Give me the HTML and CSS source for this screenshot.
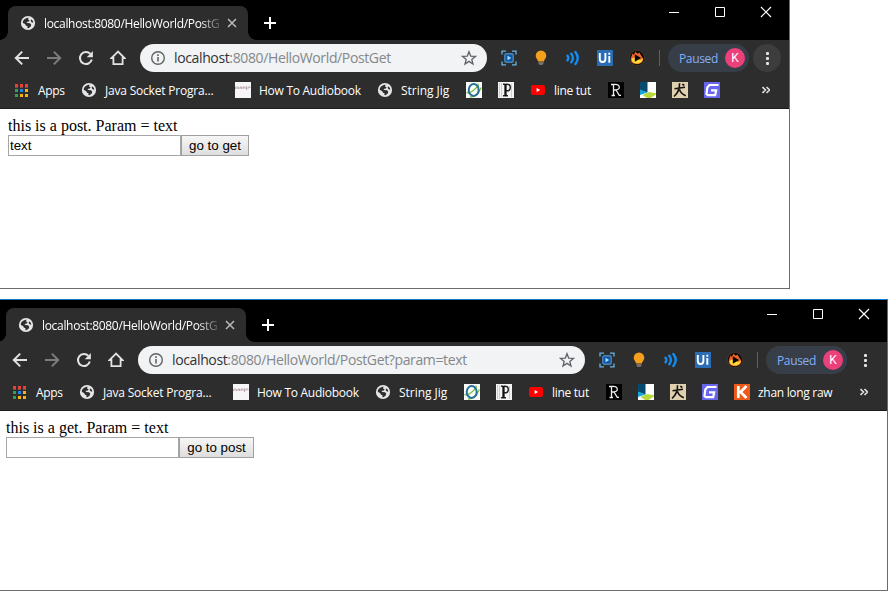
FILE: index.html
```
<!DOCTYPE html>
<html lang="en">
<head>
<meta charset="utf-8">
<title>PostGet</title>
<link rel="stylesheet" href="styles.css">
</head>
<body>
<svg class="sprite" aria-hidden="true">
  <symbol id="globe" viewBox="0 0 16 16"><circle cx="8" cy="8" r="7.1" fill="#e4e5e7"/><path d="M2.7 7.8C3 5.2 4.2 4 6.2 3.3L8.6 2.5 8 4.4 9.6 5.2 8.8 6.5 6.5 7 7.2 8.1 10 8.2 11.2 9.6 10.8 11.6 8.4 13.3 7.3 13 7.6 11.2 5.7 10.5 5.2 9 3.8 8.6ZM11 4.2l1.8 1.5.5 2.1-1.7-.5-.9-1.4z" fill="#2d2d2d"/></symbol>
  <symbol id="back" viewBox="0 0 16 16"><path d="M15 8H2M8.2 1.6 1.8 8l6.4 6.4" fill="none" stroke="currentColor" stroke-width="2"/></symbol>
  <symbol id="forward" viewBox="0 0 16 16"><path d="M1 8h13M7.8 1.6 14.2 8l-6.4 6.4" fill="none" stroke="currentColor" stroke-width="2"/></symbol>
  <symbol id="reload" viewBox="0 0 16 16"><path d="M13.8 9.6A6 6 0 1 1 12.4 3.9" fill="none" stroke="currentColor" stroke-width="2"/><path d="M14.9 1v6.2H8.7z" fill="currentColor"/></symbol>
  <symbol id="home" viewBox="0 0 16 16"><path d="M8 1.6 1.5 8H3.4v6.2h9.2V8h1.9z" fill="none" stroke="currentColor" stroke-width="1.8"/></symbol>
  <symbol id="info" viewBox="0 0 16 16"><circle cx="8" cy="8" r="6.3" fill="none" stroke="#5f6368" stroke-width="1.4"/><path d="M8 4.3v1.6M8 7.1v4.4" stroke="#5f6368" stroke-width="1.6"/></symbol>
  <symbol id="star" viewBox="0 0 16 16"><path d="m8 1.7 1.7 4.4 4.7.3-3.6 3 1.2 4.6L8 11.4 4 14l1.2-4.6-3.6-3 4.7-.3z" fill="none" stroke="#5f6368" stroke-width="1.3"/></symbol>
  <symbol id="capture" viewBox="0 0 16 16"><path d="M1 4.500V1.200h4M11 1.200h4v3.300M15 11.500v3.300h-4M5 14.800H1v-3.300" fill="none" stroke="#6ab4e4" stroke-width="1.300"/><rect x="3.800" y="3.800" width="8.400" height="8.400" rx="1.500" fill="#0f56a8" stroke="#4a86b4" stroke-width="1.400"/><path d="M6.500 5.700v4.600L10.100 8z" fill="#a8e4ff"/></symbol>
  <symbol id="bulb" viewBox="0 0 16 16"><path d="M8 .500a5.300 5.300 0 0 0-5.300 5.300c0 2.300 1.600 3.300 2.500 5.700h5.600c.9-2.400 2.500-3.400 2.500-5.700A5.300 5.300 0 0 0 8 .500z" fill="#f5a01c"/><path d="M5.500 12h5v1.800l-1.200 1.200H6.700l-1.200-1.200z" fill="#77706a"/></symbol>
  <symbol id="sound" viewBox="0 0 16 16"><path d="M2.500 5.700q1.800 2.300 0 4.600M6.300 3.800q3.300 4.200 0 8.400M10.400 2q4.700 6 0 12" fill="none" stroke="#148cf0" stroke-width="2.400" stroke-linecap="round"/></symbol>
  <symbol id="uipath" viewBox="0 0 16 16"><path d="M0 0h16v16H0z" fill="#2a6db5"/><path d="M2.800 3v6q0 3 2.800 3t2.800-3V3M12.300 6v6.700M12.300 2.800v1.900" fill="none" stroke="#fff" stroke-width="1.900"/></symbol>
  <symbol id="flame" viewBox="0 0 16 16"><circle cx="8" cy="8" r="7.500" fill="#080808" stroke="#54402f" stroke-width=".7"/><path d="M1.800 9.500C1.800 7 3 6 3.300 3.500l1.500 1.300L6.500 1.800l2.300 2 1.700-1.300 1.500 2.800 2.200 3.200c0 3.700-2.800 5.700-6.200 5.700s-6.200-1.800-6.200-4.700z" fill="#f0642a"/><path d="M2.500 9 5 7.500l6 2.500 2.800-1.500c0 3.500-2.800 5-5.800 5S2.800 12 2.500 9z" fill="#ffdc30"/><path d="M5.800 4.300v7.400L12 8z" fill="#080808"/></symbol>
  <symbol id="apps" viewBox="0 0 16 16"><path d="M1 2h3v3H1zM6 2h3v3H6zM11 2h3v3h-3z" fill="#ee3f36"/><path d="M1 7h3v3H1zM1 12h3v3H1z" fill="#31a154"/><path d="M6 7h3v3H6z" fill="#1c85ee"/><path d="M11 7h3v3h-3zM6 12h3v3H6zM11 12h3v3h-3z" fill="#f9b110"/><path d="M1 5h3v1H1zM6 5h3v1H6zM11 5h3v1h-3z" fill="#76504d"/></symbol>
  <symbol id="audiobook" viewBox="0 0 16 16"><path d="M0 0h16v16H0z" fill="#f8f5f8"/><path d="M.500 7V5M2 7V4M3.500 7V5M5 7V5h1.500v2M8 7V5h2v2M11.500 8V4M13 7V5h2v1" fill="none" stroke="#a58b94" stroke-width=".7"/></symbol>
  <symbol id="orbit" viewBox="0 0 16 16"><path d="M0 0h16v16H0z" fill="#fafbf9"/><path d="M.700 10C1.500 12 5 10.500 8.500 7.500S13.500 2 11.500 2.200M4 15c4 .3 8.500-3.500 11.300-9.500" fill="none" stroke="#78bd44" stroke-width="1.300"/><ellipse cx="7.700" cy="8" rx="5" ry="5.900" fill="none" stroke="#286d9b" stroke-width="2"/></symbol>
  <symbol id="letter-p" viewBox="0 0 16 16"><path d="M0 0h16v16H0z" fill="#f5f5f5"/><path d="M1.500 1v14M3.500 1v14M13.500 2v13" stroke="#ccc"/><path d="M5 2.300h2.500M5 13.800h5M8 2.300c3.200-.3 4.300.9 4.300 3.200S11.200 9 8 8.800" fill="none" stroke="#222" stroke-width="1.500"/><path d="M7.500 2v12" stroke="#111" stroke-width="2.300"/></symbol>
  <symbol id="youtube" viewBox="0 0 16 16"><rect x="1" y="3" width="14" height="10" rx="2.300" fill="#f00"/><path d="M6.600 5.900v4.200L10.200 8z" fill="#fff"/></symbol>
  <symbol id="letter-r" viewBox="0 0 16 16"><path d="M0 0h16v16H0z" fill="#000"/><path d="M3 2.500h3M5.500 2.500v11M3.500 13.500H7M6 2.500c4-.5 5.300.8 5.300 2.700S10 8 6 8M8 8l3.300 5.300H13" fill="none" stroke="#eee" stroke-width="1.300"/></symbol>
  <symbol id="corner" viewBox="0 0 16 16"><path d="M0 0h16v16H0z" fill="#fff"/><path d="M0 0h7.500v10.500L0 8z" fill="#064a70"/><path d="M0 7.500 7.500 10.500 0 13z" fill="#13a6d7"/><path d="M2.500 13 9 10l7 1.200v1.300L10.500 16H7z" fill="#b9d83b"/></symbol>
  <symbol id="dog" viewBox="0 0 16 16"><path d="M0 0h16v16H0z" fill="#dfd0b0"/><path d="m2.500 6.800 10.500-1.500M7.500 1.300C7.800 6 6 11 2 14.500M7.500 7.500c1 3 3 5 6.300 6.300M10.300 2.200l2 1.300" fill="none" stroke="#14120f" stroke-width="1.600"/></symbol>
  <symbol id="letter-g" viewBox="0 0 16 16"><path d="M0 0h16v16H0z" fill="#6865ee"/><path d="M14.500 3H5.500L3.300 5.500 2.500 12l1.300 1.200h7.400L12.200 8.300H7" fill="none" stroke="#fff" stroke-width="2.200"/></symbol>
  <symbol id="letter-k" viewBox="0 0 16 16"><path d="M0 0h16v16H0z" fill="#ef5b17"/><path d="M4.300 2v12M12.500 2 6.500 8l6 6" fill="none" stroke="#fff" stroke-width="2.700"/></symbol>
  <symbol id="close" viewBox="0 0 10 10"><path d="m1 1 8 8M9 1 1 9" stroke="currentColor" stroke-width="1.500"/></symbol>
  <symbol id="plus" viewBox="0 0 12 12"><path d="M6 0v12M0 6h12" stroke="#fff" stroke-width="2"/></symbol>
  <symbol id="controls" viewBox="0 0 104 12"><path d="M0 6.500h10M46.500 1.500h9v9h-9z" fill="none" stroke="#fff"/><path d="m92 1 10 10M102 1 92 11" stroke="#fff" stroke-width="1.200"/></symbol>
  <symbol id="more" viewBox="0 0 8 8"><path d="m.5 1 3 3-3 3M4.500 1l3 3-3 3" fill="none" stroke="#e0e0e0" stroke-width="1.600"/></symbol>
</svg>

<section class="window window-post">
  <header class="titlebar">
    <div class="tab"><svg class="icon"><use href="#globe"/></svg><span class="tab-title">localhost:8080/HelloWorld/PostG</span><svg class="tab-close"><use href="#close"/></svg></div>
    <svg class="new-tab"><use href="#plus"/></svg>
    <svg class="controls"><use href="#controls"/></svg>
  </header>
  <div class="toolbar">
    <nav class="nav"><svg class="icon"><use href="#back"/></svg><svg class="icon disabled"><use href="#forward"/></svg><svg class="icon"><use href="#reload"/></svg><svg class="icon"><use href="#home"/></svg></nav>
    <div class="omnibox"><svg class="icon"><use href="#info"/></svg><span class="url"><b>localhost</b>:8080/HelloWorld/PostGet</span><svg class="icon"><use href="#star"/></svg></div>
    <div class="extensions"><svg class="icon"><use href="#capture"/></svg><svg class="icon"><use href="#bulb"/></svg><svg class="icon"><use href="#sound"/></svg><svg class="icon"><use href="#uipath"/></svg><svg class="icon"><use href="#flame"/></svg></div>
    <div class="profile"><span class="paused">Paused</span><span class="avatar">K</span></div>
    <div class="menu hover"><i></i><i></i><i></i></div>
  </div>
  <div class="bookmarks">
    <a class="bm"><svg class="icon"><use href="#apps"/></svg><span class="l-apps">Apps</span></a>
    <a class="bm"><svg class="icon"><use href="#globe"/></svg><span class="l-java">Java Socket Progra...</span></a>
    <a class="bm"><svg class="icon"><use href="#audiobook"/></svg><span class="l-audio">How To Audiobook</span></a>
    <a class="bm"><svg class="icon"><use href="#globe"/></svg><span class="l-string">String Jig</span></a>
    <a class="bm"><svg class="icon"><use href="#orbit"/></svg></a>
    <a class="bm"><svg class="icon"><use href="#letter-p"/></svg></a>
    <a class="bm"><svg class="icon"><use href="#youtube"/></svg><span class="l-line">line tut</span></a>
    <a class="bm"><svg class="icon"><use href="#letter-r"/></svg></a>
    <a class="bm"><svg class="icon"><use href="#corner"/></svg></a>
    <a class="bm"><svg class="icon"><use href="#dog"/></svg></a>
    <a class="bm"><svg class="icon"><use href="#letter-g"/></svg></a>
    <svg class="more"><use href="#more"/></svg>
  </div>
  <main class="page">
    <p>this is a post. Param = text</p>
    <form><input type="text" value="text"><button type="button" class="get">go to get</button></form>
  </main>
</section>

<section class="window window-get">
  <header class="titlebar">
    <div class="tab"><svg class="icon"><use href="#globe"/></svg><span class="tab-title">localhost:8080/HelloWorld/PostG</span><svg class="tab-close"><use href="#close"/></svg></div>
    <svg class="new-tab"><use href="#plus"/></svg>
    <svg class="controls"><use href="#controls"/></svg>
  </header>
  <div class="toolbar">
    <nav class="nav"><svg class="icon"><use href="#back"/></svg><svg class="icon disabled"><use href="#forward"/></svg><svg class="icon"><use href="#reload"/></svg><svg class="icon"><use href="#home"/></svg></nav>
    <div class="omnibox"><svg class="icon"><use href="#info"/></svg><span class="url"><b>localhost</b>:8080/HelloWorld/PostGet?param=text</span><svg class="icon"><use href="#star"/></svg></div>
    <div class="extensions"><svg class="icon"><use href="#capture"/></svg><svg class="icon"><use href="#bulb"/></svg><svg class="icon"><use href="#sound"/></svg><svg class="icon"><use href="#uipath"/></svg><svg class="icon"><use href="#flame"/></svg></div>
    <div class="profile"><span class="paused">Paused</span><span class="avatar">K</span></div>
    <div class="menu"><i></i><i></i><i></i></div>
  </div>
  <div class="bookmarks">
    <a class="bm"><svg class="icon"><use href="#apps"/></svg><span class="l-apps">Apps</span></a>
    <a class="bm"><svg class="icon"><use href="#globe"/></svg><span class="l-java">Java Socket Progra...</span></a>
    <a class="bm"><svg class="icon"><use href="#audiobook"/></svg><span class="l-audio">How To Audiobook</span></a>
    <a class="bm"><svg class="icon"><use href="#globe"/></svg><span class="l-string">String Jig</span></a>
    <a class="bm"><svg class="icon"><use href="#orbit"/></svg></a>
    <a class="bm"><svg class="icon"><use href="#letter-p"/></svg></a>
    <a class="bm"><svg class="icon"><use href="#youtube"/></svg><span class="l-line">line tut</span></a>
    <a class="bm"><svg class="icon"><use href="#letter-r"/></svg></a>
    <a class="bm"><svg class="icon"><use href="#corner"/></svg></a>
    <a class="bm"><svg class="icon"><use href="#dog"/></svg></a>
    <a class="bm"><svg class="icon"><use href="#letter-g"/></svg></a>
    <a class="bm"><svg class="icon"><use href="#letter-k"/></svg><span class="l-zhan">zhan long raw</span></a>
    <svg class="more"><use href="#more"/></svg>
  </div>
  <main class="page">
    <p>this is a get. Param = text</p>
    <form><input type="text"><button type="button" class="post">go to post</button></form>
  </main>
</section>
</body>
</html>
```
FILE: styles.css
```
* { box-sizing: border-box; }
body { margin: 0; width: 890px; height: 592px; background: #fff; overflow: hidden; font-family: "Open Sans", "Noto Sans", sans-serif; }
svg { display: block; flex: none; }
.sprite { position: absolute; width: 0; height: 0; }
.icon { width: 16px; height: 16px; }

.window { display: flex; flex-direction: column; background: #fff; border: solid #6b6b6b; border-width: 0 1px 1px 0; }
.window-post { --inset: 8px; width: 790px; height: 289px; }
.window-get { --inset: 6px; width: 888px; height: 292px; margin-top: 10px; border-top: 1px solid #1979ca; }

.titlebar { display: flex; height: 40px; flex: none; background: #000; padding: 6px 16px 0 var(--inset); }
.window-get .titlebar { height: 42px; padding-top: 8px; }
.tab { position: relative; display: flex; align-items: center; width: 240px; height: 34px; padding: 0 11px 0 12px; background: #2d2d2d; border-radius: 8px 8px 0 0; color: #fff; }
.tab::before, .tab::after { content: ""; position: absolute; bottom: 0; width: 8px; height: 8px; }
.tab::before { left: -8px; background: radial-gradient(circle at 0 0, transparent 7.5px, #2d2d2d 8px); }
.tab::after { right: -8px; background: radial-gradient(circle at 100% 0, transparent 7.5px, #2d2d2d 8px); }
.tab-title { width: 176px; margin-left: 8px; white-space: nowrap; font-size: 12px; letter-spacing: -.32px; -webkit-mask-image: linear-gradient(90deg, #000 156px, transparent 180px); mask-image: linear-gradient(90deg, #000 156px, transparent 180px); }
.tab-close { width: 10px; height: 10px; margin-left: 7px; color: #bbb; }
.new-tab { width: 12px; height: 12px; margin: 11px 0 0 16px; }
.controls { width: 104px; height: 12px; margin-left: auto; }

.toolbar { display: flex; align-items: center; flex: none; height: 36px; background: #2d2d2d; padding: 0 8px 0 calc(var(--inset) + 6px); }
.nav { display: flex; gap: 16px; color: #e2e2e2; }
.disabled { color: #7c7c7c; }
.omnibox { display: flex; align-items: center; flex: 1; height: 28px; margin-left: 14px; padding: 0 10px; border-radius: 14px; background: #f1f3f4; }
.url { flex: 1; margin-left: 8px; font-size: 14px; line-height: 20px; letter-spacing: -.37px; color: #84878b; white-space: nowrap; }
.url b { font-weight: 400; color: #303236; }
.extensions { display: flex; gap: 16px; margin-left: 14px; padding-right: 14px; border-right: 1px solid #606060; height: 16px; }
.profile { display: flex; align-items: center; justify-content: space-between; width: 81px; height: 28px; margin: 0 4px 0 8px; padding: 0 4px 0 11px; border-radius: 14px; background: #373e48; }
.paused { color: #84aff6; font-size: 12px; letter-spacing: -.35px; }
.avatar { width: 20px; height: 20px; border-radius: 50%; background: #ec407a; color: #fff; font: 12px/20px Roboto, sans-serif; text-align: center; }
.menu { display: flex; flex-direction: column; align-items: center; justify-content: center; gap: 2px; width: 28px; height: 28px; border-radius: 50%; }
.menu.hover { background: #3d3d3d; }
.menu i { width: 3px; height: 3px; border-radius: 1px; background: #e2e2e2; }

.bookmarks { display: flex; align-items: center; flex: none; gap: 16px; height: 33px; padding: 0 19px 4px calc(var(--inset) + 6px); background: #2d2d2d; border-bottom: 1px solid #1c1c1c; color: #fff; font-size: 12px; }
.bm { display: flex; gap: 8px; align-items: center; height: 28px; white-space: nowrap; }
.l-apps { width: 27px; letter-spacing: -.3px; }
.l-java { width: 114px; letter-spacing: -.2px; }
.l-audio { width: 102px; letter-spacing: -.27px; }
.l-string { width: 49px; letter-spacing: -.03px; }
.l-line { width: 38px; letter-spacing: -.28px; }
.l-zhan { width: 76px; letter-spacing: -.3px; }
.more { width: 8px; height: 8px; margin-left: auto; }

.page { padding: 8px var(--inset); font: 16px/18px "Liberation Serif", serif; color: #000; }
.page p { margin: 0; }
.page form { display: flex; }
.page input { width: 173px; height: 21px; padding: 1px; border: 1px solid #a6a6a6; font: 13.333px "Liberation Sans", sans-serif; outline: 0; }
.page button { height: 21px; padding: 0; border: 1px solid #a0a0a0; background: linear-gradient(#f6f6f6, #dedede); font: 13.333px "Liberation Sans", sans-serif; color: #000; }
.get { width: 68px; }
.post { width: 75px; }
```
